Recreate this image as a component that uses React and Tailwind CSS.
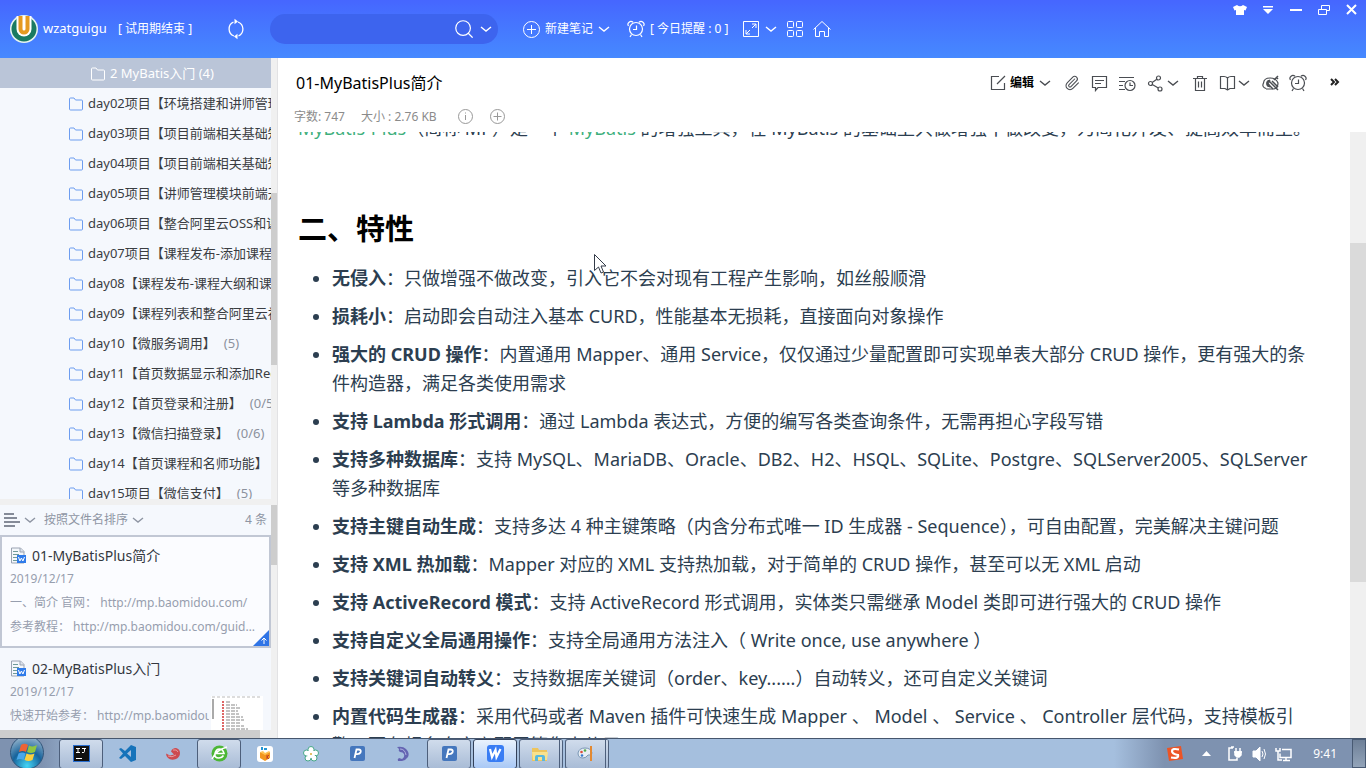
import React, { useState } from 'react';
import { Paperclip, Search } from 'lucide-react';

const folders = [
  { name: 'day02项目【环境搭建和讲师管理】' },
  { name: 'day03项目【项目前端相关基础知识】' },
  { name: 'day04项目【项目前端相关基础知识】' },
  { name: 'day05项目【讲师管理模块前端开发】' },
  { name: 'day06项目【整合阿里云OSS和课程】' },
  { name: 'day07项目【课程发布-添加课程信息】' },
  { name: 'day08【课程发布-课程大纲和课程】' },
  { name: 'day09【课程列表和整合阿里云视频】' },
  { name: 'day10【微服务调用】', count: '(5)' },
  { name: 'day11【首页数据显示和添加Redis】' },
  { name: 'day12【首页登录和注册】', count: '(0/5)' },
  { name: 'day13【微信扫描登录】', count: '(0/6)' },
  { name: 'day14【首页课程和名师功能】' },
  { name: 'day15项目【微信支付】', count: '(5)' },
];

const features = [
  ['无侵入', '：只做增强不做改变，引入它不会对现有工程产生影响，如丝般顺滑'],
  ['损耗小', '：启动即会自动注入基本 CURD，性能基本无损耗，直接面向对象操作'],
  ['强大的 CRUD 操作', '：内置通用 Mapper、通用 Service，仅仅通过少量配置即可实现单表大部分 CRUD 操作，更有强大的条件构造器，满足各类使用需求'],
  ['支持 Lambda 形式调用', '：通过 Lambda 表达式，方便的编写各类查询条件，无需再担心字段写错'],
  ['支持多种数据库', '：支持 MySQL、MariaDB、Oracle、DB2、H2、HSQL、SQLite、Postgre、SQLServer2005、SQLServer 等多种数据库'],
  ['支持主键自动生成', '：支持多达 4 种主键策略（内含分布式唯一 ID 生成器 - Sequence），可自由配置，完美解决主键问题'],
  ['支持 XML 热加载', '：Mapper 对应的 XML 支持热加载，对于简单的 CRUD 操作，甚至可以无 XML 启动'],
  ['支持 ActiveRecord 模式', '：支持 ActiveRecord 形式调用，实体类只需继承 Model 类即可进行强大的 CRUD 操作'],
  ['支持自定义全局通用操作', '：支持全局通用方法注入（ Write once, use anywhere ）'],
  ['支持关键词自动转义', '：支持数据库关键词（order、key......）自动转义，还可自定义关键词'],
  ['内置代码生成器', '：采用代码或者 Maven 插件可快速生成 Mapper 、 Model 、 Service 、 Controller 层代码，支持模板引擎，更有超多自定义配置等您来使用'],
];

function Chevron({ className = '' }) {
  return (
    <svg width="14" height="14" viewBox="0 0 14 14" fill="none" stroke="currentColor" strokeWidth="1.4" className={`shrink-0 ${className}`}>
      <path d="M2 5l5 4 5-4" />
    </svg>
  );
}

function FolderIcon() {
  return (
    <svg width="16" height="16" viewBox="0 0 16 16" fill="none" stroke="currentColor" className="shrink-0">
      <path d="M1.500 3q0-1 1-1h3.500l1.500 2h6q1 0 1 1v8q0 1-1 1h-11q-1 0-1-1z" />
    </svg>
  );
}

function DocIcon() {
  return (
    <svg width="16" height="17" viewBox="0 0 16 17" className="shrink-0">
      <path d="M1.500 1h9l3.500 3.500V16H1.500z" fill="#f4f7fb" stroke="#9aa3b2" />
      <path d="M10 1v4h4" fill="#dde3ec" stroke="#9aa3b2" />
      <path d="M3 4.500h5M3 7.500h6M3 10.500h4M3 13.500h4" stroke="#6f9a9a" />
      <rect x="7" y="8" width="9" height="8" fill="#2f7bea" />
      <path d="M8.500 10l1.400 4 1.500-3 1.500 3 1.600-4" stroke="#fff" fill="none" />
    </svg>
  );
}

function AlarmIcon() {
  return (
    <svg width="18" height="18" viewBox="0 0 18 18" fill="none" stroke="currentColor" strokeWidth="1.200" className="shrink-0">
      <circle cx="9" cy="9" r="6.500" />
      <path d="M9.500 5.500v4H6M4.500 14.500l-1.500 2.500M13.500 14.500l1.500 2.500" />
      <path d="M1.500 6C-.500 3 3.500 0 6 2.300M16.500 6C18.500 3 14.500 0 12 2.300" />
    </svg>
  );
}

function TopBar() {
  return (
    <header className="flex h-[58px] shrink-0 items-center bg-linear-to-b from-[#4666ff] to-[#4689ff] pl-[10px] text-[12px] text-white">
      <svg width="28" height="28" viewBox="0 0 28 28" className="shrink-0">
        <circle cx="14" cy="14" r="14" fill="#e8f5f0" />
        <circle cx="14" cy="14" r="12.500" fill="#197a62" />
        <path d="M6.500 1h15v13a7.500 7.500 0 0 1-15 0z" fill="#fff" />
        <path d="M8.500 1v13a5.500 5.500 0 0 0 11 0V1h-4v13a1.500 1.500 0 0 1-3 0V1z" fill="#e59a20" />
      </svg>
      <span className="ml-[5px] w-[60px] text-[13px]">wzatguigu</span>
      <span className="ml-[15px] w-[82px] whitespace-nowrap">[ 试用期结束 ]</span>
      <button aria-label="同步" className="ml-[26px]">
        <svg width="20" height="22" viewBox="0 0 20 22" fill="none" stroke="currentColor" strokeWidth="1.300">
          <path d="M7.500 4A7.600 7.600 0 0 0 8 18M12 4a7.600 7.600 0 0 1 .500 14" />
          <path d="M8.500 .800v5.400l3.500-2.700zM11.500 15.800v5.400l-3.500-2.700z" fill="currentColor" stroke="none" />
        </svg>
      </button>
      <div className="ml-6 flex h-[30px] w-[228px] items-center rounded-full bg-[#3d64ee] pr-[5px]">
        <input aria-label="搜索" className="min-w-0 flex-1 bg-transparent px-4 outline-none" />
        <button aria-label="搜索笔记"><Search size={22} strokeWidth={1.3} /></button>
        <button aria-label="搜索选项" className="ml-1"><Chevron /></button>
      </div>
      <button className="ml-6 flex items-center whitespace-nowrap">
        <svg width="19" height="19" viewBox="0 0 19 19" fill="none" stroke="currentColor">
          <circle cx="9.500" cy="9.500" r="8" />
          <path d="M5 9.500h9M9.500 5v9" />
        </svg>
        <span className="ml-1">新建笔记</span>
        <Chevron className="ml-1" />
      </button>
      <button className="ml-4 flex items-center whitespace-nowrap">
        <AlarmIcon />
        <span className="ml-[5px] w-[84px] text-left">[ 今日提醒 : 0 ]</span>
      </button>
      <button aria-label="全屏" className="ml-2 flex items-center">
        <svg width="18" height="18" viewBox="0 0 18 18" fill="none" stroke="currentColor">
          <path d="M1.500 1.500h15v15h-15zM10 8l4-4M10 4h4v4M8 10l-4 4M4 10v4h4" />
        </svg>
        <Chevron className="ml-1" />
      </button>
      <button aria-label="应用" className="ml-2">
        <svg width="18" height="18" viewBox="0 0 18 18" fill="none" stroke="currentColor">
          <rect x="1.500" y="1.500" width="6" height="6" rx="1" />
          <rect x="10.500" y="1.500" width="6" height="6" rx="1" />
          <rect x="1.500" y="10.500" width="6" height="6" rx="1" />
          <rect x="10.500" y="10.500" width="6" height="6" rx="1" />
        </svg>
      </button>
      <button aria-label="主页" className="ml-2">
        <svg width="20" height="18" viewBox="0 0 20 18" fill="none" stroke="currentColor">
          <path d="M1.500 9.500L10 1.500l8.500 8M3.500 8v8.500h4v-5h5v5h4V8" />
        </svg>
      </button>
      <div className="ml-auto flex h-full items-start gap-[14px] pt-[3px] pr-[7px]">
        <button aria-label="皮肤">
          <svg width="14" height="14" viewBox="0 0 14 14" fill="currentColor">
            <path d="M4 2q3 2.500 6 0l4 2-1.500 3.500L11 7v5H3V7l-1.500.500L0 4z" />
          </svg>
        </button>
        <button aria-label="菜单">
          <svg width="14" height="14" viewBox="0 0 14 14" fill="currentColor"><path d="M2 3h10v1.500H2zM2 6h10l-5 5z" /></svg>
        </button>
        <button aria-label="最小化">
          <svg width="14" height="14" viewBox="0 0 14 14" fill="currentColor"><path d="M1 6h12v2H1z" /></svg>
        </button>
        <button aria-label="还原">
          <svg width="14" height="14" viewBox="0 0 14 14" fill="none" stroke="currentColor">
            <path d="M4.500 6V2.500h8v5h-3M1.500 6.500h8v5h-8z" />
          </svg>
        </button>
        <button aria-label="关闭">
          <svg width="14" height="14" viewBox="0 0 14 14" fill="none" stroke="currentColor" strokeWidth="2"><path d="M2 2l9 9M11 2l-9 9" /></svg>
        </button>
      </div>
    </header>
  );
}

function NoteCard({ title, lines, selected, thumb, children }) {
  return (
    <article className={`relative h-[113px] shrink-0 overflow-hidden border-2 px-2 pt-[6px] text-[12px] text-[#979eae] ${selected ? 'border-[#c1c7d4] bg-[#fbfcff]' : 'border-transparent'}`}>
      <h2 className="flex h-6 items-center gap-[6px] text-[14px] text-[#33373e]"><DocIcon />{title}</h2>
      <p className="h-6 leading-6">2019/12/17</p>
      {lines.map(line => (
        <p key={line} className={`h-6 leading-6 ${thumb ? 'mr-[52px] overflow-hidden whitespace-nowrap' : 'truncate'}`}>{line}</p>
      ))}
      {children}
    </article>
  );
}

function Sidebar() {
  const [active, setActive] = useState('root');
  return (
    <aside className="flex w-[278px] shrink-0 flex-col border-r border-[#e2e2e4] bg-[#f5f8fd]">
      <div className="flex min-h-0 flex-1">
        <nav className="min-w-0 flex-1 overflow-hidden text-[13px] text-[#3a3d42]">
          <button
            onClick={() => setActive('root')}
            className={`flex h-[30px] w-full items-center gap-1 pt-[2px] pl-[90px] ${active === 'root' ? 'bg-[#bac5d8] text-white' : ''}`}
          >
            <FolderIcon />
            <span className="whitespace-nowrap">2 MyBatis入门 (4)</span>
          </button>
          {folders.map(f => (
            <button
              key={f.name}
              onClick={() => setActive(f.name)}
              className={`flex h-[30px] w-full items-center pt-[2px] pl-[68px] ${active === f.name ? 'bg-[#bac5d8]' : ''}`}
            >
              <span className="text-[#6d9df0]"><FolderIcon /></span>
              <span className="ml-1 whitespace-nowrap">{f.name}</span>
              {f.count && <span className="ml-2 whitespace-nowrap text-[#8c929d]">{f.count}</span>}
            </button>
          ))}
        </nav>
        <div className="w-[6px] shrink-0 bg-[#f0f0f0] pt-[135px]"><div className="h-[172px] bg-[#cdcdcd]" /></div>
      </div>
      <div className="h-[6px] shrink-0 bg-[#f0f0f0]" />
      <div className="flex h-[225px] shrink-0">
        <div className="flex min-w-0 flex-1 flex-col overflow-hidden">
          <div className="flex h-[30px] shrink-0 items-center pr-1 pl-1 text-[12px] text-[#8e95a3]">
            <button aria-label="视图" className="flex items-center">
              <svg width="16" height="16" viewBox="0 0 16 16" stroke="#858b98" strokeWidth="2"><path d="M0 2h10M0 6h13M0 10h16M0 14h11" /></svg>
              <Chevron className="ml-[3px]" />
            </button>
            <button className="ml-[7px] flex items-center whitespace-nowrap">按照文件名排序<Chevron className="ml-[3px]" /></button>
            <span className="ml-auto">4 条</span>
          </div>
          <NoteCard
            selected
            title="01-MyBatisPlus简介"
            lines={['一、简介 官网： http://mp.baomidou.com/', '参考教程： http://mp.baomidou.com/guide/quick-start.html']}
          >
            <svg width="16" height="16" viewBox="0 0 16 16" className="absolute right-0 bottom-0">
              <path d="M16 0v16H0z" fill="#2f74e6" />
              <path d="M11 14V8M8.500 10.500L11 8l2.500 2.500" stroke="#fff" fill="none" />
            </svg>
          </NoteCard>
          <NoteCard thumb title="02-MyBatisPlus入门" lines={['快速开始参考： http://mp.baomidou.com']}>
            <svg width="52" height="36" viewBox="0 0 52 36" className="absolute top-[46px] right-[6px]">
              <path d="M0 0h52v36H0z" fill="#fff" />
              <path d="M1 1h48" stroke="#bbb" strokeDasharray="3 2" />
              <path d="M2 3v20" stroke="#aaa" strokeWidth="2" />
              <path d="M15 6h5M15 9h11M15 12h14M15 15h12M15 18h13M15 21h17M15 24h18M15 27h14M15 30h18M15 33h22" stroke="#888" strokeDasharray="4 1" />
              <path d="M12 5v30" stroke="#d66" strokeWidth="2" strokeDasharray="2 1" />
            </svg>
          </NoteCard>
        </div>
        <div className="w-[6px] shrink-0 bg-[#f0f0f0]"><div className="h-[60px] bg-[#cdcdcd]" /></div>
      </div>
      <div className="h-2 shrink-0 bg-[#f0f0f0]"><div className="h-2 w-[260px] bg-[#cdcdcd]" /></div>
    </aside>
  );
}

function NoteToolbar() {
  return (
    <div className="ml-auto flex items-center pr-[25px] text-[#4a4d52]">
      <button className="flex items-center text-[12px] font-bold text-black">
        <svg width="16" height="16" viewBox="0 0 16 16" fill="none" stroke="#4a4d52" strokeWidth="1.200"><path d="M9 1.500H1.500v13h13V8M7 9l8-8" /></svg>
        <span className="ml-1">编辑</span>
        <Chevron className="ml-1 text-[#4a4d52]" />
      </button>
      <button aria-label="附件" className="ml-3"><Paperclip size={16} strokeWidth={1.6} /></button>
      <button aria-label="评论" className="ml-[11px]">
        <svg width="17" height="17" viewBox="0 0 17 17" fill="none" stroke="currentColor" strokeWidth="1.200">
          <path d="M1.500 1.500h14v11H7l-2.500 3v-3h-3zM4 5.500h9M4 8.500h6" />
        </svg>
      </button>
      <button aria-label="历史" className="ml-[10px]">
        <svg width="18" height="17" viewBox="0 0 18 17" fill="none" stroke="currentColor" strokeWidth="1.200">
          <path d="M1 2.500h15M1 6.500h6M1 10.500h4M1 14.500h6" />
          <circle cx="12" cy="10.500" r="5" />
          <path d="M12 7.500v3h3" />
        </svg>
      </button>
      <button aria-label="分享" className="ml-[11px] flex items-center">
        <svg width="16" height="17" viewBox="0 0 16 17" fill="none" stroke="currentColor" strokeWidth="1.200">
          <circle cx="3.500" cy="8.500" r="2" /><circle cx="11.500" cy="3" r="2" /><circle cx="13" cy="14" r="2" />
          <path d="M5.200 7.500l4.600-3.300M5.300 9.400l6 3.500" />
        </svg>
        <Chevron className="ml-[3px]" />
      </button>
      <button aria-label="删除" className="ml-3">
        <svg width="16" height="17" viewBox="0 0 16 17" fill="none" stroke="currentColor" strokeWidth="1.200">
          <path d="M1 3.500h14M5.500 3V1.500h5V3M3.500 4v11.500h9V4M6.500 6.500v6M9.500 6.500v6" />
        </svg>
      </button>
      <button aria-label="阅读" className="ml-[11px] flex items-center">
        <svg width="18" height="16" viewBox="0 0 18 16" fill="none" stroke="currentColor" strokeWidth="1.200">
          <path d="M8.500 3v12M8.500 3Q7 1.500 5 1.500H1.500v12H6l2.500 1.500M8.500 3Q10 1.500 12 1.500h3.500v12H11L8.500 15" />
        </svg>
        <Chevron />
      </button>
      <button aria-label="隐藏批注" className="ml-[11px]">
        <svg width="18" height="17" viewBox="0 0 18 17" fill="none" stroke="currentColor">
          <path d="M4 13.500Q-.500 12 1.500 8 2 3 8 3q6 0 8 5 0 5-4 6H4" strokeWidth="1.200" />
          <path d="M8 5a3.500 3.500 0 1 0 0 7q-3-3 0-7z" fill="currentColor" />
          <path d="M7 6l9 9M10 6l6 6M12 5l4-4M14 2l2 2M6 9l5 5" strokeWidth="1.500" />
        </svg>
      </button>
      <button aria-label="提醒" className="ml-[9px]"><AlarmIcon /></button>
      <button aria-label="更多" className="ml-[22px]">
        <svg width="12" height="12" viewBox="0 0 12 12" fill="none" stroke="#222" strokeWidth="2"><path d="M2 2l3 3-3 3M6 2l3 3-3 3" /></svg>
      </button>
    </div>
  );
}

function NoteView() {
  return (
    <main className="flex min-w-0 flex-1 flex-col bg-white">
      <div className="flex h-[50px] shrink-0 items-center pl-[18px]">
        <h1 className="whitespace-nowrap text-[16px] text-black">01-MyBatisPlus简介</h1>
        <NoteToolbar />
      </div>
      <div className="flex h-6 shrink-0 items-start pl-4 text-[12px] leading-[18px] text-[#8b8b8b]">
        <span className="w-[67px]">字数: 747</span>
        <span className="w-[96px]">大小 : 2.76 KB</span>
        <button aria-label="信息">
          <svg width="17" height="17" viewBox="0 0 17 17" fill="none" stroke="#999"><circle cx="8.500" cy="8.500" r="7" /><path d="M8.500 7v5M8.500 4.500v1" /></svg>
        </button>
        <button aria-label="添加标签" className="ml-[15px]">
          <svg width="17" height="17" viewBox="0 0 17 17" fill="none" stroke="#999"><circle cx="8.500" cy="8.500" r="7" /><path d="M4.500 8.500h8M8.500 4.500v8" /></svg>
        </button>
      </div>
      <div className="flex min-h-0 flex-1">
        {/* scrolled part way down, so the intro line is cut at the top */}
        <div className="flex min-w-0 flex-1 flex-col justify-start overflow-hidden pr-[30px] pl-5 text-[18px] leading-[29px] text-[#2c3e50]">
          <p className="-mt-[18px] shrink-0 whitespace-nowrap">
            <a href="#mp" className="text-[#3eaf7c]">MyBatis-Plus</a>（简称 MP）是一个 <a href="#mybatis" className="text-[#3eaf7c]">MyBatis</a> 的增强工具，在 MyBatis 的基础上只做增强不做改变，为简化开发、提高效率而生。
          </p>
          <h2 className="mt-[66px] shrink-0 text-[29px] leading-[40px] font-bold text-black">二、特性</h2>
          <ul className="mt-[15px] flex shrink-0 list-disc flex-col gap-[9px] pl-[34px]">
            {features.map(([name, text]) => (
              <li key={name}><strong>{name}</strong>{text}</li>
            ))}
          </ul>
        </div>
        <div className="w-4 shrink-0 bg-[#f0f0f0] pt-[111px]"><div className="h-[339px] bg-[#dadada]" /></div>
      </div>
    </main>
  );
}

function TaskButton({ label, open, active, stacked, children }) {
  return (
    <button
      aria-label={label}
      className={`flex h-[30px] w-[44px] shrink-0 items-center justify-center rounded-[3px] border ${active ? 'border-[#33415a] bg-linear-to-b from-[#e9f2fd] to-[#a9c8f5]' : open ? 'border-[#4d5f7b] bg-linear-to-b from-[#d0dcec] to-[#a9bcd6]' : 'border-transparent'} ${stacked ? 'border-r-4 border-double' : ''}`}
    >
      {children}
    </button>
  );
}

function Taskbar() {
  return (
    <footer className="flex h-[30px] shrink-0 items-center border-t border-[#46566d] bg-linear-to-r from-[#7e92b0] from-3% via-[#a5bfde] via-7% to-[#a5bfde]">
      <button aria-label="开始" className="ml-[10px]">
        <svg width="34" height="29" viewBox="0 0 34 29">
          <defs>
            <radialGradient id="orb" cx=".5" cy=".9" r=".9">
              <stop offset="0" stopColor="#45d5f5" /><stop offset=".5" stopColor="#16639c" /><stop offset="1" stopColor="#9db8ce" />
            </radialGradient>
          </defs>
          <circle cx="17" cy="13.500" r="16.500" fill="url(#orb)" stroke="#31557a" />
          <path d="M11 6q3.500-2.500 7 0L16 13q-3.500-2-7 0z" fill="#ed6334" />
          <path d="M19 6.500q4 2 8-.500L25 13q-4 2-8 0z" fill="#8fc641" />
          <path d="M8.500 14.500q3.500-2 7 0L13.500 21q-3.500-2-7 0z" fill="#4aa7ea" />
          <path d="M16.500 14.500q4 2 8 0L22.500 21q-4 2-8 0z" fill="#fbcf3e" />
        </svg>
      </button>
      <div className="ml-[15px] flex gap-[2px]">
        <TaskButton label="IntelliJ IDEA" open>
          <svg width="17" height="17" viewBox="0 0 17 17"><path d="M0 0h17v17H0z" fill="#2a6fd0" /><path d="M1 1h15v15H1z" fill="#111" /><path d="M3 3.500h4M5 3v5M3 7.500h4M9 3.500h4M11.500 3v3.500Q11.500 8 9 7.500M3 13.500h6" stroke="#fff" fill="none" /></svg>
        </TaskButton>
        <TaskButton label="Visual Studio Code">
          <svg width="17" height="17" viewBox="0 0 17 17"><path d="M12 0l5 2v13l-5 2-6-6-4 3-2-1 4-4.500L0 4l2-1 4 3zM12 5L8 8.500l4 3.500z" fill="#1673ba" fillRule="evenodd" /></svg>
        </TaskButton>
        <TaskButton label="Redis">
          <svg width="16" height="16" viewBox="0 0 16 16"><path d="M1 7.500l4 2 4-1-3-3q1-3.500 5-3.500 4 1 4 5 0 4-4 6-5 2-8-1-2-2-2-4.500z" fill="#cc4a50" /><path d="M8 4q4-1 5 2M3 10q4 2 8-1" stroke="#eb9a9a" fill="none" /></svg>
        </TaskButton>
        <TaskButton label="浏览器" open>
          <svg width="17" height="17" viewBox="0 0 17 17" fill="none"><circle cx="8.500" cy="8.500" r="8" fill="#4cb735" /><path d="M4 8.500h9Q12 4 8.500 4T4 8.500t4 4.500q3 0 4.500-2.500M1 14Q5 5 16 2" stroke="#fff" strokeWidth="1.600" /></svg>
        </TaskButton>
        <TaskButton label="工具箱">
          <svg width="16" height="16" viewBox="0 0 16 16"><rect width="16" height="16" rx="3" fill="#fff" /><path d="M3 6l5 2 5-2v6l-5 3-5-3z" fill="#f29620" /><path d="M3 6l3-1 2 2 4-2 1 1-5 3z" fill="#ffc354" /><path d="M5 1v3M7 3h3" stroke="#2495d3" strokeWidth="2" /><path d="M10 9v4M12 9l-2 2 2 2" stroke="#c33f26" fill="none" /></svg>
        </TaskButton>
        <TaskButton label="Navicat">
          <svg width="16" height="16" viewBox="0 0 16 16" fill="#fff" stroke="#48a889"><circle cx="8" cy="3.500" r="3" /><circle cx="12.500" cy="7" r="3" /><circle cx="11" cy="12" r="3" /><circle cx="5" cy="12" r="3" /><circle cx="3.500" cy="7" r="3" /><circle cx="8" cy="8" r="4" stroke="none" /><circle cx="8" cy="8" r="1" fill="#d8ad35" stroke="none" /></svg>
        </TaskButton>
        <TaskButton label="PDMan"><PIcon /></TaskButton>
        <TaskButton label="MySQL 工具">
          <svg width="14" height="16" viewBox="0 0 14 16"><path d="M1 1q6-1 9 2 4 4 2 8-2 3-6 4H2q-1-2 1-3l3 1q3-2 2-5-1-2-4-2-2-1-1-3z" fill="#6464b2" /><path d="M4 3q5 0 6 6" stroke="#aeb0df" fill="none" /></svg>
        </TaskButton>
        <TaskButton label="PDMan 窗口" open><PIcon /></TaskButton>
        <TaskButton label="为知笔记" active>
          <svg width="17" height="17" viewBox="0 0 17 17"><rect width="17" height="17" rx="3" fill="#397df4" /><path d="M3 4l2 8 3.500-7 1 7 4-8" stroke="#fff" strokeWidth="2.200" fill="none" /></svg>
        </TaskButton>
        <TaskButton label="资源管理器" open stacked>
          <svg width="18" height="16" viewBox="0 0 18 16"><path d="M1 2h6l1 2h8v11H1z" fill="#eec55d" /><path d="M1 6h16l-1 8H2z" fill="#f9e28e" /><path d="M4 15v-4q0-2 2-2h6q2 0 2 2v4h-3v-4H7v4z" fill="#58b8df" /></svg>
        </TaskButton>
        <TaskButton label="画图" open stacked>
          <svg width="17" height="17" viewBox="0 0 17 17"><path d="M1 8q1-5 7-5t7 5q0 3-4 2-2 3-5 3Q1 13 1 8z" fill="#e8edf3" stroke="#7997b5" /><circle cx="4.500" cy="7" r="1.300" fill="#dd4c3a" /><circle cx="8" cy="5.500" r="1.300" fill="#54aa46" /><circle cx="5" cy="10.500" r="1.300" fill="#3478cd" /><path d="M14 1v15" stroke="#e38931" strokeWidth="2" /></svg>
        </TaskButton>
      </div>
      <div className="ml-auto flex h-full items-center bg-linear-to-r from-transparent to-[#7e92b0] to-20% pl-[52px] text-white">
        <svg width="18" height="18" viewBox="0 0 18 18"><path d="M1 3l14-2 2 13-14 2z" fill="#ec5425" /><path d="M13 4.500Q6 3 6 6t6 4q1 4-7 2.500" stroke="#fff" strokeWidth="2.200" fill="none" /></svg>
        <svg width="9" height="5" viewBox="0 0 9 5" className="ml-[18px]"><path d="M0 5l4.500-5L9 5z" fill="currentColor" /></svg>
        <svg width="16" height="16" viewBox="0 0 16 16" className="ml-4" fill="none" stroke="currentColor" strokeWidth="1.500"><path d="M6 2H2v12h8v-2M4 1h3M9 2v4M13 2v4M7 6h8" /><path d="M8 6h6v3l-2 2h-2L8 9z" fill="currentColor" /></svg>
        <svg width="15" height="16" viewBox="0 0 15 16" className="ml-[9px]" fill="none" stroke="currentColor"><path d="M1 5h3l4-4v14l-4-4H1z" fill="currentColor" /><path d="M10 5q2 3 0 6M12 3q3 5 0 10" /></svg>
        <svg width="17" height="16" viewBox="0 0 17 16" className="ml-2" fill="none" stroke="currentColor" strokeWidth="1.500"><path d="M7 3.500h9v8H5v-4M8 14.500h7M11 12v2M1 2v3h4V2M3 5v9h4" /></svg>
        <time className="ml-[21px] text-[12px]">9:41</time>
        <button aria-label="显示桌面" className="ml-[15px] h-[29px] w-[14px] border border-[#485a73] bg-linear-to-b from-[#6e8098] to-[#93a4b9]" />
      </div>
    </footer>
  );
}

function PIcon() {
  return (
    <svg width="15" height="15" viewBox="0 0 15 15">
      <rect width="15" height="15" rx="2" fill="#4577bd" />
      <path d="M4.500 12l2-8.500H9Q11.500 4 10.500 6.500 9.500 8.500 6 8" stroke="#fff" strokeWidth="1.800" fill="none" />
    </svg>
  );
}

export default function App() {
  return (
    <div className="relative flex h-screen flex-col overflow-hidden font-['Noto_Sans','Noto_Sans_CJK_SC',sans-serif]">
      <TopBar />
      <div className="flex min-h-0 flex-1">
        <Sidebar />
        <NoteView />
      </div>
      <Taskbar />
      <svg width="14" height="21" viewBox="0 0 14 21" className="pointer-events-none absolute top-[254px] left-[594px]">
        <path d="M.500.500v16l4-3.500 2.500 6 2.500-1-2.500-6h5z" fill="#fff" stroke="#333b48" />
      </svg>
    </div>
  );
}
